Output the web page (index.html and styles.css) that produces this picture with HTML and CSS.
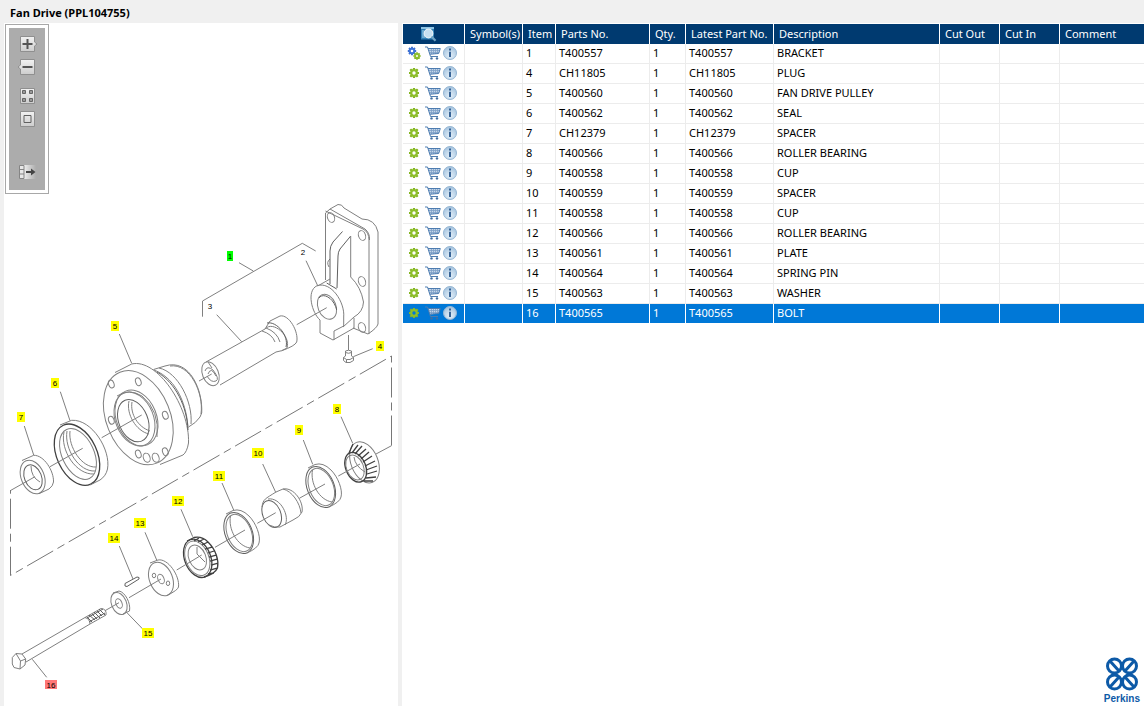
FILE: index.html
```html
<!DOCTYPE html>
<html lang="en">
<head>
<meta charset="utf-8">
<title>Fan Drive (PPL104755)</title>
<link rel="stylesheet" href="styles.css">
</head>
<body>
<svg class="sprite" aria-hidden="true">
  <defs>
    <linearGradient id="face" x1="0" y1="0" x2="0" y2="1"><stop offset="0" stop-color="#f2f2f2"/><stop offset="1" stop-color="#cdcdcd"/></linearGradient>
    <linearGradient id="fade"><stop offset="0" stop-color="#eee"/><stop offset="1" stop-color="#acacac"/></linearGradient>
    <radialGradient id="ball" cx=".5" cy=".7" r=".7"><stop offset="0" stop-color="#e4f0f9"/><stop offset="1" stop-color="#a3c2de"/></radialGradient>
    <symbol id="gear" viewBox="0 0 12 12">
      <path d="M6 1V3M6 9V11M1 6H3M9 6H11M2.300 2.300L3.800 3.800M8.200 8.200L9.700 9.700M9.700 2.300L8.200 3.800M3.800 8.200L2.300 9.700" stroke="#84b522" stroke-width="2.200"/>
      <circle cx="6" cy="6" r="2.800" fill="none" stroke="#8dbe2b" stroke-width="2.200"/>
    </symbol>
    <symbol id="gears" viewBox="0 0 14 14">
      <path d="M5 .8V9.200M.8 5H9.200M2 2L8 8M8 2L2 8" stroke="#3c6fd0" stroke-width="1.900"/>
      <circle cx="5" cy="5" r="2.300" fill="#fff" stroke="#3f74d8" stroke-width="2"/>
      <path d="M10 6.300V13.700M6.300 10H13.700M7.400 7.400L12.600 12.600M12.600 7.400L7.400 12.600" stroke="#84b522" stroke-width="1.700"/>
      <circle cx="10" cy="10" r="1.900" fill="#fff" stroke="#8dbe2b" stroke-width="1.800"/>
    </symbol>
    <symbol id="cart" viewBox="0 0 16 14">
      <path d="M3 2L14.500 3L13.500 7.500L5 8.500Z" fill="#c4d6ea"/>
      <path d="M3.500 4.500H14.500M4.200 6.500H14M6.500 3V8M8.500 3V8M10.500 3V8M12.500 3V7.500" fill="none" stroke="#7d9fc6" stroke-width=".8"/>
      <path d="M0 1H2.500L5.500 10.500H13M3 2.500H15.300L13.700 7.500L5 8.200" fill="none" stroke="#4d7cb0"/>
      <circle cx="6.500" cy="12.400" r="1.200" fill="#426e9f"/><circle cx="12" cy="12.400" r="1.200" fill="#426e9f"/>
    </symbol>
    <symbol id="info" viewBox="0 0 14 14">
      <circle cx="7" cy="7" r="6.500" fill="url(#ball)" stroke="#94b5d3"/>
      <path d="M6 2.500H8V4.500H6ZM6 5.700H8V11H6Z" fill="#376497"/>
    </symbol>
    <symbol id="search" viewBox="0 0 17 16">
      <rect x="1" y="1" width="13" height="12.500" fill="#2f7fb5"/><path d="M1 1H14V3H1Z" fill="#8ec3e3"/><path d="M2 5H4M2 7H4M2 9H4M2 11H5" stroke="#a9d3ec"/>
      <circle cx="8.500" cy="7.500" r="4.300" fill="#c7e0f1" stroke="#e8f1f7" stroke-width="1.200"/>
      <path d="M11.500 10.500L15.500 14.800" stroke="#6fa3c4" stroke-width="2.200"/>
    </symbol>
  </defs>
</svg>

<header class="titlebar"><h1>Fan Drive (PPL104755)</h1></header>
<main class="workspace">
  <section class="drawing" aria-label="Parts drawing">
    <nav class="toolbar" aria-label="Drawing tools">
      <button aria-label="Zoom in"><svg viewBox="0 0 20 16"><path d="M2.500.5H16.500V6L19 8L16.500 10V15.500H2.500Z" fill="url(#face)" stroke="#8f8f8f"/><path d="M4.500 8H14.500M9.500 3V13" stroke="#555" stroke-width="2"/></svg></button>
      <button aria-label="Zoom out"><svg viewBox="0 0 20 16"><path d="M2.500.5H16.500V15.500H2.500V10L0 8L2.500 6Z" fill="url(#face)" stroke="#8f8f8f"/><path d="M4.500 8H14.500" stroke="#555" stroke-width="2"/></svg></button>
      <button class="group" aria-label="Show thumbnails"><svg viewBox="0 0 20 16"><path d="M2.500.5H16.500V15.500H2.500Z" fill="url(#face)" stroke="#8f8f8f"/><path d="M4.500 2.500h3v3h-3zM11.500 2.500h3v3h-3zM4.500 10.500h3v3h-3zM11.500 10.500h3v3h-3z" fill="#999" stroke="#666"/></svg></button>
      <button aria-label="Fit to window"><svg viewBox="0 0 20 16"><path d="M2.500.5H16.500V15.500H2.500Z" fill="url(#face)" stroke="#8f8f8f"/><path d="M6 4.500H13V11.500H6Z" fill="none" stroke="#606060"/></svg></button>
      <button class="last" aria-label="Hide list"><svg viewBox="0 0 20 16"><path d="M6 1H18V15H6Z" fill="url(#fade)"/><path d="M1.500 1.500H6V14.500H1.500ZM1.500 5.500H6M1.500 10H6" fill="#e8e8e8" stroke="#858585"/><path d="M8 8H15" stroke="#444" stroke-width="2"/><path d="M13 4.500L17.500 8L13 11.500Z" fill="#444"/></svg></button>
    </nav>
    <svg class="diagram" viewBox="4 23 394 683" role="img" aria-label="Exploded view of the fan drive">
      <g class="line">
        <!-- bracket -->
        <path d="M325.500 280V213L330 209L338 204.500Q342 204 344 208L362 219Q375 219 378 232V324Q377 328 368 334L353 328M325.500 211L363 229Q369 232 369 240V334M330 209L365 229Q370 233 369.500 240"/>
        <ellipse cx="331" cy="217.500" rx="3.500" ry="5" transform="rotate(-20 331 217.500)"/>
        <ellipse cx="362" cy="235.500" rx="3.500" ry="5" transform="rotate(-20 362 235.500)"/>
        <ellipse cx="362" cy="281.500" rx="3.500" ry="5" transform="rotate(-20 362 281.500)"/>
        <ellipse cx="362" cy="327.500" rx="3.500" ry="5" transform="rotate(-20 362 327.500)"/>
        <path d="M330 259Q326 262 329 267"/>
        <path class="heavy" d="M342.500 231.500L333 242Q330 246 330 251V284M350.700 236L340 249Q338 252 338 256L337 288M326.700 283L336.700 289"/>
        <path d="M350.700 236V277Q361 287 363.500 302Q363 312 354 317L343 327M317.700 286L330 279M320 333L333 340L354 328V318M320 333V320C312 313 306 291 317 285.700C331 281 345 302 343.700 317V326L334 331V340"/>
        <ellipse cx="327" cy="306.700" rx="9" ry="13" transform="rotate(-22 327 306.700)"/>
        <path class="heavy" d="M319 298C323 292 334 298 336.700 310"/>
        <!-- shaft -->
        <ellipse cx="210.500" cy="373.700" rx="8" ry="12.500" transform="rotate(-22 210.500 373.700)"/>
        <path d="M206 362L265 329L270 321L280 316C289 314 299 332 296.700 342Q295 346 281.700 350.700L276 352L220 385M265 329C273 320 291 336 287 348L281.700 350.700M262 331Q272 334 275 342M266 328Q277 332 280 342M205 371Q207 365 213 370Q220 379 216 381Q211 383 207 376M208 374Q211 366 216 376M208 362L212 368"/>
        <path class="heavy" d="M267 323C277 321 289 336 286 347"/>
        <!-- plug -->
        <path d="M348.500 335V350M345.500 351Q348.500 349.500 351.500 351V356L353.500 357.500V360.500L350 362.500H346L343.500 360.500V357.500L345.500 356V351M345.500 352.500Q348.500 354 351.500 352.500M343.500 357.500L346.500 359.500H350L353.500 357.500M346.500 359.500V362.500"/>
        <!-- pulley -->
        <ellipse cx="138.300" cy="417.700" rx="32" ry="49" transform="rotate(-22 138.300 417.700)"/>
        <path d="M115 372.500L131.700 364C157 358 190 407 188.500 443Q187 452 183 455L160 464.500M153.500 369.500L165 366C190 358 203 391 201.700 413L200 417Q196 423 189 426.700"/>
        <path d="M154 370C178 379 187 408 188 428M159 368C178 372 193 402 191 424M170 366C190 363 204 393 201 414"/>
        <path class="heavy" d="M157 372C176 383 187 407 188 430"/>
        <ellipse cx="136.500" cy="418" rx="20" ry="29" transform="rotate(-22 136.500 418)"/>
        <ellipse cx="134.500" cy="419" rx="19" ry="28" transform="rotate(-22 134.500 419)"/>
        <ellipse class="heavy" cx="133.300" cy="420.700" rx="14.500" ry="22" transform="rotate(-22 133.300 420.700)"/>
        <path d="M129 401C126 414 136 431 149 434M132 402C130 414 138 427 150 431M117 396Q129 388 142 396Q160 411 157 437"/>
        <g>
          <ellipse cx="111.300" cy="384" rx="2.700" ry="4" transform="rotate(-20 111.300 384)"/>
          <ellipse cx="138.300" cy="381.700" rx="2.700" ry="4" transform="rotate(-20 138.300 381.700)"/>
          <ellipse cx="165.300" cy="415.300" rx="2.700" ry="4" transform="rotate(-20 165.300 415.300)"/>
          <ellipse cx="111.300" cy="420.300" rx="2.700" ry="4" transform="rotate(-20 111.300 420.300)"/>
          <ellipse cx="138.300" cy="454" rx="2.700" ry="4" transform="rotate(-20 138.300 454)"/>
          <ellipse cx="165.300" cy="451.700" rx="2.700" ry="4" transform="rotate(-20 165.300 451.700)"/>
          <ellipse cx="146.700" cy="457.700" rx="3.300" ry="4.700" transform="rotate(-20 146.700 457.700)"/>
          <ellipse cx="155.700" cy="457.700" rx="3.300" ry="4.700" transform="rotate(-20 155.700 457.700)"/>
        </g>
        <!-- seal -->
        <ellipse class="dark" cx="77" cy="454.700" rx="20" ry="32.500" transform="rotate(-25 77 454.700)"/>
        <path d="M60 425L71.700 420.300C92 419 111 450 107.500 469Q106 476 100 480L90 485"/>
        <ellipse cx="78" cy="454" rx="16" ry="27" transform="rotate(-25 78 454)"/>
        <path d="M64 432C60 450 76 475 94 474M67 431C64 449 79 472 95 471M70 431C68 447 82 468 96 467"/>
        <!-- spacer 7 -->
        <ellipse cx="32.700" cy="477" rx="11.500" ry="17.500" transform="rotate(-22 32.700 477)"/>
        <ellipse class="heavy" cx="33" cy="477.300" rx="8.500" ry="13" transform="rotate(-22 33 477.300)"/>
        <path d="M22 460.500L33.700 455.300C44 455 54 471 53.500 482Q53 486 49 489L39 493.700M31 466Q31 477 40 482"/>
        <!-- bearing 8 -->
        <ellipse cx="364.500" cy="462.300" rx="13.500" ry="21.500" transform="rotate(-22 364.500 462.300)"/>
        <ellipse class="dark" cx="355.700" cy="467.300" rx="10" ry="15.500" transform="rotate(-22 355.700 467.300)"/>
        <ellipse cx="355" cy="467.500" rx="8.500" ry="13" transform="rotate(-22 355 467.500)"/>
        <path class="dark" d="M349 453L353 444M352 453L358 445M355 454L362 446M358 456L366 449M361 459L369 452M363 462L372 456M365 466L375 461M366 470L377 466M367 474L377 471M366 478L376 477M364 481L373 481"/>
        <path d="M354 457Q355 466 365 472"/>
        <!-- cup 9 -->
        <ellipse class="heavy" cx="320.700" cy="487" rx="13.500" ry="21.500" transform="rotate(-22 320.700 487)"/>
        <ellipse cx="321.300" cy="487" rx="12" ry="19.500" transform="rotate(-22 321.300 487)"/>
        <path d="M308 468L315 464.500Q323 462 331 470C338 477 343 490 341 497Q340 502 329 507M312.500 470C310 483 319 500 332 502"/>
        <!-- spacer 10 -->
        <ellipse class="heavy" cx="271.700" cy="514" rx="9" ry="14" transform="rotate(-22 271.700 514)"/>
        <path d="M262 507C263 499 265 499 276 492L283 489C294 487 304 502 302 512Q300 517 293 520L280 527Q275 528 269 525M268 499C281 497 290 517 285 525M283 489C292 491 300 503 301 513"/>
        <!-- cup 11 -->
        <ellipse class="heavy" cx="238.700" cy="533" rx="13.500" ry="21.500" transform="rotate(-22 238.700 533)"/>
        <ellipse cx="239.300" cy="533" rx="12" ry="19.500" transform="rotate(-22 239.300 533)"/>
        <path d="M226 514L233 510.500Q241 508 249 516C256 523 261 536 259 543Q258 548 247 553M230.500 516C228 529 237 546 250 548"/>
        <!-- bearing 12 -->
        <ellipse class="dark" cx="197.700" cy="558.300" rx="13" ry="20" transform="rotate(-22 197.700 558.300)"/>
        <ellipse cx="197.300" cy="558.300" rx="11.500" ry="18" transform="rotate(-22 197.300 558.300)"/>
        <ellipse cx="197.300" cy="557.500" rx="8.500" ry="13" transform="rotate(-22 197.300 557.500)"/>
        <path class="dark" d="M187 541L194 537.500Q202 536 208 542C216 550 219 560 217.500 568Q215 574 204 577M194 541L199 538M198 542L204 539M202 545L208 542M205 549L212 547M208 553L214 551M209 557L216 555M210 561L217 559M211 565L218 563M210 570L217 568M208 574L214 573"/>
        <path d="M197 547V554L205 562"/>
        <!-- plate, pin, washer -->
        <ellipse cx="161" cy="579" rx="11.500" ry="17.500" transform="rotate(-22 161 579)"/>
        <path d="M150 563L158 560C168 558 180 576 178.500 587Q178 590 167 595.500"/>
        <ellipse cx="154" cy="575.500" rx="1.700" ry="2.300"/><ellipse cx="161" cy="579" rx="3" ry="5" transform="rotate(-22 161 579)"/><ellipse cx="168" cy="583.300" rx="1.700" ry="2.300"/>
        <path class="heavy" d="M125 583.500L137 577Q140 577 139 579L127 586.500Q124 587 125 583.500"/>
        <ellipse cx="119" cy="603.500" rx="7.500" ry="11.500" transform="rotate(-22 119 603.500)"/>
        <ellipse cx="119" cy="603.500" rx="3" ry="5" transform="rotate(-22 119 603.500)"/>
        <path d="M113 593L119 591C125 592 131 603 129.500 611L123 614"/>
        <!-- bolt -->
        <path d="M12.300 657.500L16 653.500L22 654L25.700 659L25 665L20 669L14 667.500L12.300 664ZM16 653.500L20.500 661L25.700 659M20.500 661L20 669M22 654L85 617.500L101 608.500Q107 609 106 615L90 624L26 662M85 617.500Q90 619 90 624"/>
        <path class="heavy" d="M87 617L92 622M89 615L95 620M92 614L97 619M94 612L100 618M97 611L102 616M99 609L105 615M87 618L103 609M89 622L105 613"/>
        <!-- part axes and leaders -->
        <path d="M10.500 490.500L35 476.700M50 466.700L82.700 448.300M101.700 437.700L141.700 415M199 381L211.700 374M296.700 324.700L326.700 307.700M391.500 445.700L376 454M360 464L338.300 476M325 484L299.300 498.300M275.700 512.700L257.300 523.300M245 530L215 547.300M201.700 555L176.700 570M161 579L129 597.700M119 602.700L105 610.700"/>
        <path d="M239 262.700L253.300 271M202.500 316.700V301L302.300 243.300L315.700 251M306 260.700L317.700 285.700M216.700 314.700L241.700 341.700M372.700 348.700L353.300 356.700M119.300 334L131.700 363.300M60.300 391.700L70 420.700M24.300 426L33.700 455M341 416.700L352.700 443.300M303.300 440L312.700 464.300M262.700 464L275.700 492.300M222 483L233.700 510M181 509.300L192.700 536.700M145 532.300L156.700 560M119.300 546L133 579M126 611.700L142.700 629M32.300 659.300L46.700 677.300"/>
        <path class="chain" d="M391.500 445.500V356L10.500 575.500V490"/>
      </g>
      <g class="callouts">
        <path class="yellow" d="M376 341h8v10h-8zM111 321h8v10h-8zM51 378h8v10h-8zM17 412h8v10h-8zM333 404h8v10h-8zM295 425h8v10h-8zM252 448h12v10h-12zM213 471h12v10h-12zM172 496h12v10h-12zM134 518h12v10h-12zM108 533h12v10h-12zM142 628h12v10h-12z"/>
        <path class="green" d="M227 251h6v10h-6z"/><path class="red" d="M45 680h12v9h-12z"/>
        <text x="230" y="259">1</text><text x="303" y="255">2</text><text x="210" y="309">3</text><text x="380" y="349">4</text><text x="115" y="329">5</text><text x="55" y="386">6</text><text x="21" y="420">7</text><text x="337" y="412">8</text><text x="299" y="433">9</text><text x="258" y="456">10</text><text x="219" y="479">11</text><text x="178" y="504">12</text><text x="140" y="526">13</text><text x="114" y="541">14</text><text x="148" y="636">15</text><text x="51" y="688">16</text>
      </g>
    </svg>
  </section>

  <section class="parts" aria-label="Parts list">
    <table>
      <colgroup><col class="c-tools"><col class="c-symbol"><col class="c-item"><col class="c-part"><col class="c-qty"><col class="c-latest"><col class="c-desc"><col class="c-cut"><col class="c-cut"><col></colgroup>
      <thead><tr><th><button aria-label="Search parts"><svg class="i-search"><use href="#search"/></svg></button></th><th>Symbol(s)</th><th>Item</th><th>Parts No.</th><th>Qty.</th><th>Latest Part No.</th><th>Description</th><th>Cut Out</th><th>Cut In</th><th>Comment</th></tr></thead>
      <tbody>
        <tr><td><div class="tools"><button aria-label="Assembly"><svg class="i-gears"><use href="#gears"/></svg></button><button aria-label="Add to cart"><svg class="i-cart"><use href="#cart"/></svg></button><button aria-label="Information"><svg class="i-info"><use href="#info"/></svg></button></div></td><td></td><td>1</td><td>T400557</td><td>1</td><td>T400557</td><td>BRACKET</td><td></td><td></td><td></td></tr>
        <tr><td><div class="tools"><button aria-label="Part"><svg class="i-gear"><use href="#gear"/></svg></button><button aria-label="Add to cart"><svg class="i-cart"><use href="#cart"/></svg></button><button aria-label="Information"><svg class="i-info"><use href="#info"/></svg></button></div></td><td></td><td>4</td><td>CH11805</td><td>1</td><td>CH11805</td><td>PLUG</td><td></td><td></td><td></td></tr>
        <tr><td><div class="tools"><button aria-label="Part"><svg class="i-gear"><use href="#gear"/></svg></button><button aria-label="Add to cart"><svg class="i-cart"><use href="#cart"/></svg></button><button aria-label="Information"><svg class="i-info"><use href="#info"/></svg></button></div></td><td></td><td>5</td><td>T400560</td><td>1</td><td>T400560</td><td>FAN DRIVE PULLEY</td><td></td><td></td><td></td></tr>
        <tr><td><div class="tools"><button aria-label="Part"><svg class="i-gear"><use href="#gear"/></svg></button><button aria-label="Add to cart"><svg class="i-cart"><use href="#cart"/></svg></button><button aria-label="Information"><svg class="i-info"><use href="#info"/></svg></button></div></td><td></td><td>6</td><td>T400562</td><td>1</td><td>T400562</td><td>SEAL</td><td></td><td></td><td></td></tr>
        <tr><td><div class="tools"><button aria-label="Part"><svg class="i-gear"><use href="#gear"/></svg></button><button aria-label="Add to cart"><svg class="i-cart"><use href="#cart"/></svg></button><button aria-label="Information"><svg class="i-info"><use href="#info"/></svg></button></div></td><td></td><td>7</td><td>CH12379</td><td>1</td><td>CH12379</td><td>SPACER</td><td></td><td></td><td></td></tr>
        <tr><td><div class="tools"><button aria-label="Part"><svg class="i-gear"><use href="#gear"/></svg></button><button aria-label="Add to cart"><svg class="i-cart"><use href="#cart"/></svg></button><button aria-label="Information"><svg class="i-info"><use href="#info"/></svg></button></div></td><td></td><td>8</td><td>T400566</td><td>1</td><td>T400566</td><td>ROLLER BEARING</td><td></td><td></td><td></td></tr>
        <tr><td><div class="tools"><button aria-label="Part"><svg class="i-gear"><use href="#gear"/></svg></button><button aria-label="Add to cart"><svg class="i-cart"><use href="#cart"/></svg></button><button aria-label="Information"><svg class="i-info"><use href="#info"/></svg></button></div></td><td></td><td>9</td><td>T400558</td><td>1</td><td>T400558</td><td>CUP</td><td></td><td></td><td></td></tr>
        <tr><td><div class="tools"><button aria-label="Part"><svg class="i-gear"><use href="#gear"/></svg></button><button aria-label="Add to cart"><svg class="i-cart"><use href="#cart"/></svg></button><button aria-label="Information"><svg class="i-info"><use href="#info"/></svg></button></div></td><td></td><td>10</td><td>T400559</td><td>1</td><td>T400559</td><td>SPACER</td><td></td><td></td><td></td></tr>
        <tr><td><div class="tools"><button aria-label="Part"><svg class="i-gear"><use href="#gear"/></svg></button><button aria-label="Add to cart"><svg class="i-cart"><use href="#cart"/></svg></button><button aria-label="Information"><svg class="i-info"><use href="#info"/></svg></button></div></td><td></td><td>11</td><td>T400558</td><td>1</td><td>T400558</td><td>CUP</td><td></td><td></td><td></td></tr>
        <tr><td><div class="tools"><button aria-label="Part"><svg class="i-gear"><use href="#gear"/></svg></button><button aria-label="Add to cart"><svg class="i-cart"><use href="#cart"/></svg></button><button aria-label="Information"><svg class="i-info"><use href="#info"/></svg></button></div></td><td></td><td>12</td><td>T400566</td><td>1</td><td>T400566</td><td>ROLLER BEARING</td><td></td><td></td><td></td></tr>
        <tr><td><div class="tools"><button aria-label="Part"><svg class="i-gear"><use href="#gear"/></svg></button><button aria-label="Add to cart"><svg class="i-cart"><use href="#cart"/></svg></button><button aria-label="Information"><svg class="i-info"><use href="#info"/></svg></button></div></td><td></td><td>13</td><td>T400561</td><td>1</td><td>T400561</td><td>PLATE</td><td></td><td></td><td></td></tr>
        <tr><td><div class="tools"><button aria-label="Part"><svg class="i-gear"><use href="#gear"/></svg></button><button aria-label="Add to cart"><svg class="i-cart"><use href="#cart"/></svg></button><button aria-label="Information"><svg class="i-info"><use href="#info"/></svg></button></div></td><td></td><td>14</td><td>T400564</td><td>1</td><td>T400564</td><td>SPRING PIN</td><td></td><td></td><td></td></tr>
        <tr><td><div class="tools"><button aria-label="Part"><svg class="i-gear"><use href="#gear"/></svg></button><button aria-label="Add to cart"><svg class="i-cart"><use href="#cart"/></svg></button><button aria-label="Information"><svg class="i-info"><use href="#info"/></svg></button></div></td><td></td><td>15</td><td>T400563</td><td>1</td><td>T400563</td><td>WASHER</td><td></td><td></td><td></td></tr>
        <tr class="selected"><td><div class="tools"><button aria-label="Part"><svg class="i-gear"><use href="#gear"/></svg></button><button aria-label="Add to cart"><svg class="i-cart"><use href="#cart"/></svg></button><button aria-label="Information"><svg class="i-info"><use href="#info"/></svg></button></div></td><td></td><td>16</td><td>T400565</td><td>1</td><td>T400565</td><td>BOLT</td><td></td><td></td><td></td></tr>
      </tbody>
    </table>
    <div class="brand">
      <svg class="mark" viewBox="0 0 32 34" aria-hidden="true">
        <g fill="none" stroke="#0d5aa7" stroke-width="3"><circle cx="8.500" cy="9" r="7"/><circle cx="23.500" cy="9" r="7"/><circle cx="8.500" cy="25" r="7"/><circle cx="23.500" cy="25" r="7"/></g>
        <path d="M4 4L13 14M28 4L19 14M4 30L13 20M28 30L19 20" stroke="#0d5aa7" stroke-width="3"/>
      </svg>
      <span>Perkins</span>
    </div>
  </section>
</main>
</body>
</html>
```
FILE: styles.css
```css
* { box-sizing: border-box; }
body {
  margin: 0;
  min-height: 100vh;
  display: flex;
  flex-direction: column;
  background: #f0f0f0;
  color: #000;
  font: 11px/16px "Noto Sans", "Open Sans", sans-serif;
}
button { display: block; padding: 0; border: 0; background: none; }
button svg { display: block; }
.sprite { position: absolute; width: 0; height: 0; }

.titlebar { height: 23px; padding: 5px 10px 0; }
.titlebar h1 { margin: 0; font-size: 11px; line-height: 16px; font-weight: 700; }

.workspace { flex: 1; display: flex; gap: 4px; padding-left: 4px; }

.drawing { position: relative; flex: 0 0 394px; background: #fff; }
.diagram { display: block; width: 100%; }
.line { fill: none; stroke: #808080; stroke-width: 1; stroke-linejoin: round; }
.line .heavy { stroke: #606060; }
.line .dark { stroke: #404040; stroke-width: 1.3; }
.line .chain { stroke: #777; stroke-dasharray: 30 5 8 5; }
.callouts { font: 8px "Liberation Sans", Arial, sans-serif; text-anchor: middle; }
.yellow { fill: #ff0; }
.green { fill: #0f0; }
.red { fill: #f77; }

.toolbar {
  position: absolute;
  top: 1px;
  left: 1px;
  width: 44px;
  height: 170px;
  padding: 8px 8px 0;
  border: 1px solid #a8a8a8;
  background: #acacac;
  box-shadow: inset 0 0 0 3px #fff;
}
.toolbar button { width: 20px; height: 16px; margin: 3px 0 7px 4px; }
.toolbar .group { margin-top: 13px; }
.toolbar .last { margin-top: 37px; }

.parts { flex: 1; min-width: 0; display: flex; flex-direction: column; background: #fff; padding-left: 1px; }
table { width: 100%; margin-top: 1px; table-layout: fixed; border-collapse: separate; border-spacing: 0; }
th, td { height: 20px; padding: 0 0 0 3px; text-align: left; white-space: nowrap; overflow: hidden; }
th { padding-left: 5px; background: #003a70; color: #fff; font-weight: 400; border-right: 1px solid #fff; }
th button { margin-left: 12px; }
td { padding-bottom: 2px; border-right: 1px solid #ececec; border-bottom: 1px solid #ececec; }
th:last-child, td:last-child { border-right: 0; }
.selected td { background: #0078d7; color: #fff; border-color: #fff; }
.c-tools { width: 62px; }
.c-symbol { width: 58px; }
.c-item { width: 33px; }
.c-part { width: 94px; }
.c-qty { width: 36px; }
.c-latest { width: 88px; }
.c-desc { width: 166px; }
.c-cut { width: 60px; }
.tools { display: grid; grid-template-columns: 16px 17px 14px; gap: 2px; align-items: center; }
.tools button { justify-self: center; }
.i-gear { width: 12px; height: 12px; }
.i-gears, .i-info { width: 14px; height: 14px; }
.i-cart { width: 16px; height: 14px; }
.i-search { width: 17px; height: 16px; }

.brand { margin: auto 4px 0 auto; text-align: center; }
.mark { display: block; width: 34px; height: 34px; margin: 0 auto; }
.brand span { display: block; color: #0d5aa7; font: 700 10px/15px "Liberation Sans", Arial, sans-serif; }
```
